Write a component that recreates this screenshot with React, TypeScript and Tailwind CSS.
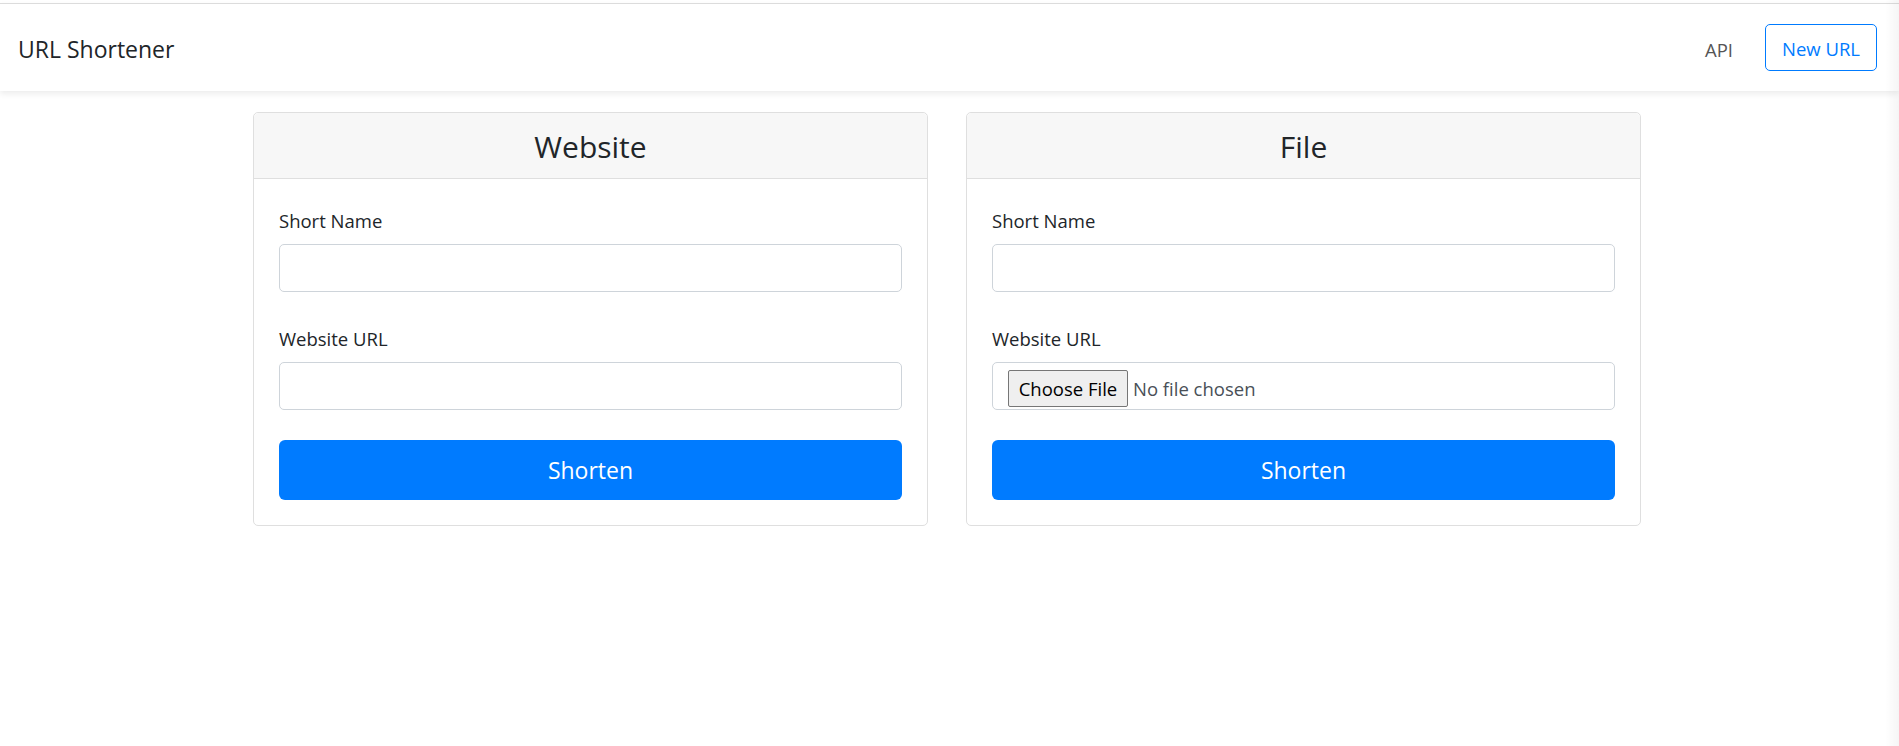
const font = "font-['Segoe_UI','Open_Sans','Noto_Sans',sans-serif]"

function Field({ label, children }: { label: string; children: React.ReactNode }) {
  return (
    <div className="mb-[30px]">
      <label className="block h-[30px] mb-[10px] pt-[2px] text-[18.5px] leading-[30px] text-[#212529]">{label}</label>
      {children}
    </div>
  )
}

function TextInput() {
  return <input className="block w-full h-[48px] px-[15px] border border-[#ced4da] rounded-[5px] bg-white outline-none" />
}

function FileInput() {
  return (
    <div className="flex items-start w-full h-[48px] pl-[15px] pt-[7px] border border-[#ced4da] rounded-[5px] bg-white">
      <span className="flex items-center justify-center w-[120px] h-[37px] border border-[#767676] rounded-[2px] bg-[#efefef] text-[18.5px] text-black">
        Choose File
      </span>
      <span className="ml-[5px] h-[37px] leading-[37px] text-[18.5px] text-[#495057]">No file chosen</span>
    </div>
  )
}

function Card({ title, children }: { title: string; children: React.ReactNode }) {
  return (
    <div className="w-[675px] border border-[#dfdfdf] rounded-[5px] bg-white">
      <div className="flex items-center justify-center h-[66px] bg-[#f7f7f7] border-b border-[#dfdfdf] rounded-t-[5px]">
        <h3 className="pt-[2px] text-[30px] leading-[42px] text-[#212529]">{title}</h3>
      </div>
      <div className="px-[25px] pt-[25px] pb-[25px]">
        {children}
        <button className="w-full h-[60px] rounded-[6px] bg-[#007bff] text-[23px] text-white">Shorten</button>
      </div>
    </div>
  )
}

export default function App() {
  return (
    <div className={`relative min-h-screen bg-white ${font}`}>
      <div className="pt-[3px]">
        <nav className="flex items-center justify-between h-[88px] pl-[18px] pr-[22px] border-t border-[#dcdcdc] bg-white shadow-[0_3px_6px_rgba(0,0,0,0.075)]">
          <span className="pt-[4px] text-[23px] text-[#212529]">URL Shortener</span>
          <div className="flex items-center gap-[32px]">
            <span className="pt-[4px] text-[18.5px] text-[#555]">API</span>
            <button className="w-[112px] h-[47px] pt-[2px] border border-[#007bff] rounded-[5px] text-[18.5px] text-[#007bff]">New URL</button>
          </div>
        </nav>
      </div>

      <div className="flex gap-[38px] pl-[253px] pt-[21px]">
        <Card title="Website">
          <Field label="Short Name"><TextInput /></Field>
          <Field label="Website URL"><TextInput /></Field>
        </Card>
        <Card title="File">
          <Field label="Short Name"><TextInput /></Field>
          <Field label="Website URL"><FileInput /></Field>
        </Card>
      </div>

      <div className="absolute right-0 top-0 h-full w-[14px] bg-gradient-to-r from-transparent to-[rgba(0,0,0,0.04)]" />
    </div>
  )
}
